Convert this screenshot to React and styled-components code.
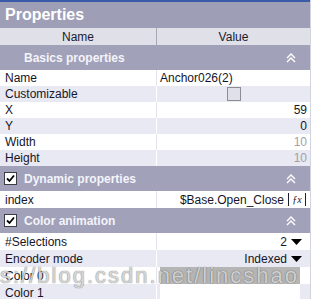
import React from "react";
import styled, { createGlobalStyle } from "styled-components";

const Global = createGlobalStyle`
  html, body { margin: 0; padding: 0; background: #ffffff; }
  body { font-family: "Liberation Sans", Arial, sans-serif; }
`;

const Panel = styled.div`
  position: relative;
  width: 311px;
  height: 299px;
  overflow: hidden;
  background: #ffffff;
  border-right: 1px solid #d4d4de;
  box-sizing: border-box;
  font-size: 12px;
  color: #15152a;
`;

const TopLine = styled.div`
  height: 2px;
  background: #3a5ca8;
`;

const TitleBar = styled.div`
  height: 26px;
  display: flex;
  align-items: center;
  padding-left: 5px;
  background: #9e9eb6;
  color: #ffffff;
  font-weight: bold;
  font-size: 16px;
`;

const HeaderRow = styled.div`
  display: grid;
  grid-template-columns: 156px 1fr;
  height: 17px;
  background: #e0e0e8;
`;

const HeaderCell = styled.div`
  display: flex;
  align-items: center;
  justify-content: center;
  border-left: ${(p) => (p.$first ? "none" : "1px solid #a8a8b4")};
  color: #1a1a30;
`;

const SectionBar = styled.div`
  height: ${(p) => p.$h}px;
  display: flex;
  align-items: center;
  background: #a1a1b9;
  color: #f4f4fa;
  font-weight: bold;
`;

const CheckSlot = styled.div`
  width: 24px;
  flex: none;
  display: flex;
  align-items: center;
  padding-left: 4px;
  box-sizing: border-box;
`;

const CheckBox = styled.div`
  width: 11px;
  height: 11px;
  background: #ffffff;
  border: 1px solid #3c3c44;
  display: flex;
  align-items: center;
  justify-content: center;
`;

const SectionTitle = styled.div`
  flex: 1;
`;

const Chevron = styled.div`
  width: 20px;
  margin-right: 9px;
  display: flex;
  justify-content: center;
`;

const Row = styled.div`
  display: grid;
  grid-template-columns: 156px 1fr;
  height: ${(p) => p.$h}px;
  background: ${(p) => (p.$alt ? "#e8e9f2" : "#ffffff")};
`;

const Label = styled.div`
  display: flex;
  align-items: center;
  padding-left: 5px;
  white-space: nowrap;
`;

const Value = styled.div`
  display: flex;
  align-items: center;
  justify-content: ${(p) => p.$justify || "flex-end"};
  padding: 0 ${(p) => (p.$pr != null ? p.$pr : 3)}px 0 3px;
  border-left: 1px solid ${(p) => (p.$alt ? "#ffffff" : "#e4e4ec")};
  color: ${(p) => (p.$muted ? "#a0a0a8" : "#15152a")};
  white-space: nowrap;
  gap: 4px;
`;

const SmallBox = styled.div`
  width: 12px;
  height: 12px;
  background: #e0e0e8;
  border: 1px solid #8c8c94;
`;

const FxIcon = styled.span`
  display: inline-flex;
  align-items: center;
  justify-content: center;
  height: 13px;
  width: 16px;
  border-left: 1px solid #202030;
  border-right: 1px solid #202030;
  font-family: "Liberation Serif", serif;
  font-style: italic;
  font-size: 10px;
  line-height: 1;
`;

const Swatch = styled.div`
  flex: 1;
  align-self: stretch;
  background: ${(p) => p.$color};
  margin-right: 10px;
`;

const Watermark = styled.div`
  position: absolute;
  left: 0;
  top: 265px;
  font-family: "Liberation Sans", Arial, sans-serif;
  font-size: 22px;
  line-height: 22px;
  letter-spacing: 2px;
  color: rgba(255, 255, 255, 0.72);
  text-shadow: 0 0 1px rgba(60, 60, 60, 0.55), 0 0 1px rgba(60, 60, 60, 0.55);
  white-space: nowrap;
  pointer-events: none;
`;

const DoubleChevron = () => (
  <svg width="10" height="10" viewBox="0 0 10 10">
    <path d="M1 5 L5 1 L9 5" fill="none" stroke="#ffffff" strokeWidth="1.4" />
    <path d="M1 9 L5 5 L9 9" fill="none" stroke="#ffffff" strokeWidth="1.4" />
  </svg>
);

const Check = () => (
  <svg width="11" height="11" viewBox="0 0 11 11">
    <path d="M2 5.5 L4.5 8 L9 2.5" fill="none" stroke="#000000" strokeWidth="1.8" />
  </svg>
);

const DownArrow = () => (
  <svg width="11" height="6" viewBox="0 0 11 6">
    <path d="M0 0 L11 0 L5.5 6 Z" fill="#000000" />
  </svg>
);

const Section = ({ title, checked, h = 25 }) => (
  <SectionBar $h={h}>
    <CheckSlot>
      {checked && (
        <CheckBox>
          <Check />
        </CheckBox>
      )}
    </CheckSlot>
    <SectionTitle>{title}</SectionTitle>
    <Chevron>
      <DoubleChevron />
    </Chevron>
  </SectionBar>
);

const Prop = ({ label, alt, h = 16, children, ...rest }) => (
  <Row $alt={alt} $h={h}>
    <Label>{label}</Label>
    <Value $alt={alt} {...rest}>
      {children}
    </Value>
  </Row>
);

export default function App() {
  return (
    <>
      <Global />
      <Panel>
        <TopLine />
        <TitleBar>Properties</TitleBar>
        <HeaderRow>
          <HeaderCell $first>Name</HeaderCell>
          <HeaderCell>Value</HeaderCell>
        </HeaderRow>
        <Section title="Basics properties" />
        <Prop label="Name" $justify="flex-start">
          Anchor026(2)
        </Prop>
        <Prop label="Customizable" alt $justify="center">
          <SmallBox />
        </Prop>
        <Prop label="X">59</Prop>
        <Prop label="Y" alt>
          0
        </Prop>
        <Prop label="Width" $muted>
          10
        </Prop>
        <Prop label="Height" alt $muted>
          10
        </Prop>
        <Section title="Dynamic properties" checked />
        <Prop label="index" h={17} $pr={4}>
          $Base.Open_Close
          <FxIcon>ƒx</FxIcon>
        </Prop>
        <Section title="Color animation" checked />
        <Prop label="#Selections" h={17} $pr={8}>
          2 <DownArrow />
        </Prop>
        <Prop label="Encoder mode" alt h={17} $pr={8}>
          Indexed <DownArrow />
        </Prop>
        <Prop label="Color 0" h={17} $pr={0}>
          <Swatch $color="#b5b5b5" />
        </Prop>
        <Prop label="Color 1" alt h={17} $pr={0}>
          <Swatch $color="#ffffff" />
        </Prop>
        <Watermark>s://blog.csdn.net/lincshao</Watermark>
      </Panel>
    </>
  );
}
